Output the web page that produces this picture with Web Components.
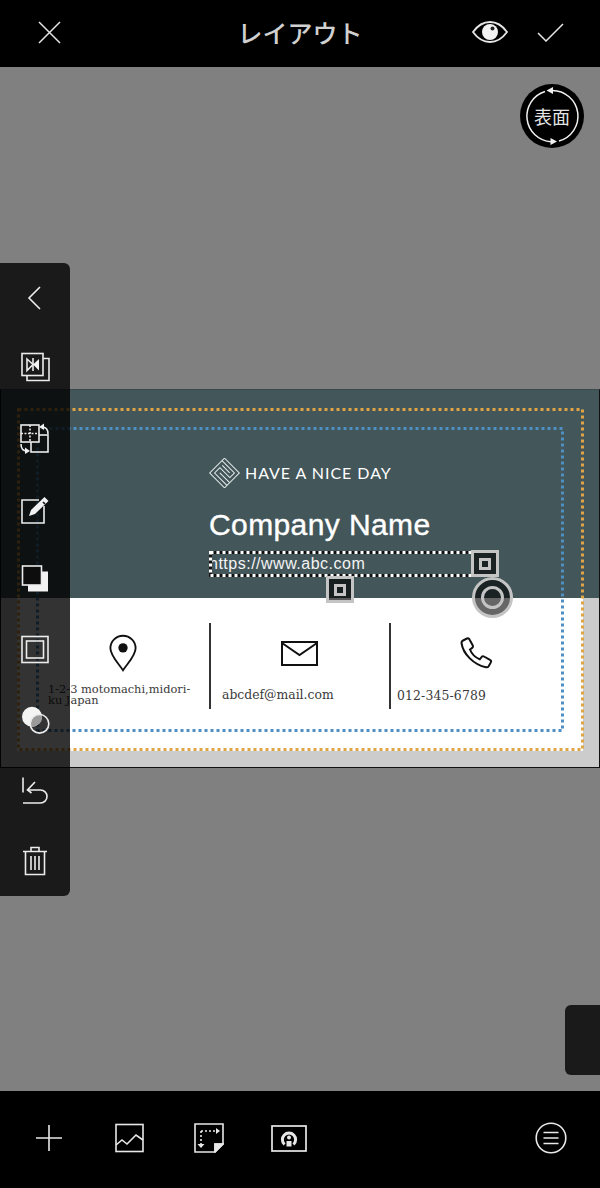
<!DOCTYPE html>
<html lang="ja">
<head>
<meta charset="utf-8">
<title>レイアウト</title>
<style>
  html, body { margin: 0; padding: 0; background: #808080; }
</style>
</head>
<body>
<layout-screen>
  <top-bar slot="top" title="レイアウト"></top-bar>
  <business-card slot="canvas">
    <span slot="brand">HAVE A NICE DAY</span>
    <span slot="company">Company Name</span>
    <span slot="url">https://www.abc.com</span>
    <span slot="address">1-2-3 motomachi,midori-ku Japan</span>
    <span slot="mail">abcdef@mail.com</span>
    <span slot="phone">012-345-6789</span>
  </business-card>
  <side-panel slot="overlay"></side-panel>
  <flip-button slot="overlay">表面</flip-button>
  <drawer-tab slot="overlay"></drawer-tab>
  <bottom-bar slot="bottom"></bottom-bar>
</layout-screen>

<script>
function define(name, css, html) {
  var template = document.createElement('template');
  template.innerHTML = `<style>:host, * { box-sizing: border-box; } ${css}</style>${html}`;
  customElements.define(name, class extends HTMLElement {
    constructor() {
      super();
      this.attachShadow({mode: 'open'});
      this.shadowRoot.appendChild(template.content.cloneNode(true));
    }
    connectedCallback() {
      var title = this.shadowRoot.querySelector('[data-title]');
      if (title) title.textContent = this.getAttribute('title');
      this.removeAttribute('title');
    }
  });
}

define('layout-screen', `
  :host { display: flex; flex-direction: column; width: 600px; height: 1188px; overflow: hidden; }
  .canvas { position: relative; flex: 1; background: #808080; padding-top: 322px; }
`, `
  <slot name="top"></slot>
  <div class="canvas"><slot name="canvas"></slot><slot name="overlay"></slot></div>
  <slot name="bottom"></slot>
`);

define('top-bar', `
  :host { display: grid; grid-template-columns: 1fr auto 1fr; align-items: center; height: 67px; background: #000; padding: 0 36px 3px 36px; }
  h1 { margin: 0; font: 500 25px/1 "Noto Sans CJK JP", sans-serif; color: #d0d0d0; }
  .right { display: flex; justify-content: flex-end; align-items: center; gap: 29px; }
  svg { display: block; }
  .close { margin-left: 2px; }
`, `
  <svg class="close" width="23" height="23" viewBox="0 0 23 23" fill="none" stroke="#e6e6e6" stroke-width="1.5"><path d="M1 1l21 21M22 1L1 22"/></svg>
  <h1 data-title></h1>
  <div class="right">
    <svg width="36" height="24" viewBox="0 0 36 24" fill="none"><path d="M1 12C6 5 11 2 18 2s12 3 17 10c-5 7-10 10-17 10S6 19 1 12z" stroke="#e6e6e6" stroke-width="1.8"/><circle cx="18" cy="12" r="8" fill="#f2f2f2"/><circle cx="20.5" cy="8.5" r="2" fill="#222"/></svg>
    <svg width="27" height="19" viewBox="0 0 27 19" fill="none" stroke="#e6e6e6" stroke-width="1.5"><path d="M1 10l8 8L26 1"/></svg>
  </div>
`);

define('bottom-bar', `
  :host { display: flex; align-items: center; height: 97px; background: #000; padding: 0 9.5px 3px 9px; }
  .cell { display: flex; justify-content: center; width: 80px; }
  .end { margin-left: auto; }
  svg { display: block; }
`, `
  <div class="cell"><svg width="28" height="28" viewBox="0 0 28 28" stroke="#e8e8e8" stroke-width="1.6"><path d="M1 14h26M14 1v26"/></svg></div>
  <div class="cell"><svg width="29" height="30" viewBox="0 0 29 30" fill="none" stroke="#e8e8e8" stroke-width="1.6"><rect x="1" y="1.5" width="27" height="27"/><path d="M1 22l6-5 5 4 9-9 7 5"/></svg></div>
  <div class="cell"><svg width="30" height="30" viewBox="0 0 30 30" fill="none" stroke="#e8e8e8" stroke-width="1.6"><path d="M1 1h28v20l-8 8H1z"/><path d="M21 29v-8h8" /><path d="M21 29l8-8v0h-8z" fill="#e8e8e8"/><path d="M7 8h15M7 8v14" stroke-dasharray="2 2"/><path d="M22 5l4 3-4 3z" fill="#e8e8e8" stroke="none"/><path d="M3.5 21h7L7 25z" fill="#e8e8e8" stroke="none"/></svg></div>
  <div class="cell"><svg width="36" height="27" viewBox="0 0 36 27" fill="none" stroke="#e8e8e8"><rect x="1" y="1" width="34" height="25" stroke-width="1.7"/><path d="M13.5 19.5a6.6 6.6 0 1 1 9 0" stroke-width="3"/><circle cx="18" cy="12.5" r="2" fill="#e8e8e8" stroke="none"/><rect x="15.5" y="16" width="5" height="5.5" fill="#e8e8e8" stroke="none"/></svg></div>
  <div class="cell end"><svg width="32" height="32" viewBox="0 0 32 32" fill="none" stroke="#e8e8e8" stroke-width="1.6"><circle cx="16" cy="16" r="14.8"/><path d="M8.5 10.5h15M8.5 16h15M8.5 21.5h15"/></svg></div>
`);

define('side-panel', `
  :host { position: absolute; left: 0; top: 196px; width: 70px; height: 633px; display: grid; grid-template-rows: repeat(9, 1fr); background: rgba(0,0,0,.8); border-radius: 0 6px 6px 0; }
  .tool { display: flex; align-items: center; justify-content: center; }
  svg { display: block; width: 40px; height: 40px; overflow: visible; fill: none; stroke: #ececec; stroke-width: 1.6; }
  .solid { fill: #f2f2f2; stroke: none; }
`, `
  <div class="tool"><svg viewBox="0 0 40 40"><path d="M25 9L14 20l11 11"/></svg></div>
  <div class="tool"><svg viewBox="0 0 40 40"><path d="M28 10.5h6v22H12v-5"/><rect x="7" y="5.5" width="21" height="22"/><path d="M18 10v13"/><path d="M12 11l6 5.500-6 6z"/><path class="solid" d="M24 11l-6 5.500 6 6z"/></svg></div>
  <div class="tool"><svg viewBox="0 0 40 40"><rect x="16" y="16" width="17" height="17"/><rect x="6" y="6" width="18" height="17" fill="#111"/><path d="M15 6v17M6 14.500h18" stroke-dasharray="2 1.500"/><path d="M33 15c0-5-2-7-6-7"/><path class="solid" d="M29 4.500l-5 3.500 5 3z"/><path d="M6 25c0 4 2 7 6 7"/><path class="solid" d="M10 28.500l5 3.500-5 3z"/></svg></div>
  <div class="tool"><svg viewBox="0 0 40 40"><path d="M24 11H7v23h22V17"/><path class="solid" d="M14 27l2-6L29.500 8l4 4L20 25z"/><path d="M28 13l2 2" stroke="#111"/></svg></div>
  <div class="tool"><svg viewBox="0 0 40 40"><rect class="solid" x="13" y="12.500" width="20" height="20"/><rect x="7.500" y="7" width="19" height="19" fill="#0d0d0d"/></svg></div>
  <div class="tool"><svg viewBox="0 0 40 40"><rect x="7" y="6.500" width="26" height="26"/><rect x="11.500" y="11" width="17" height="17"/></svg></div>
  <div class="tool"><svg viewBox="0 0 40 40"><circle cx="17" cy="16.800" r="10" fill="#f4f4f4" stroke="none"/><path d="M15.440 26.670A10 10 0 0 0 26.740 14.570 9.500 9.500 0 0 0 15.440 26.670z" fill="#9a9a9a" stroke="none"/><circle cx="24.500" cy="23.800" r="9.300"/></svg></div>
  <div class="tool"><svg viewBox="0 0 40 40"><path d="M8 7.500v15"/><path d="M20 12l-7.500 8 4 3"/><path d="M12.500 20h13a6.500 6.500 0 0 1 0 13H8"/></svg></div>
  <div class="tool"><svg viewBox="0 0 40 40"><path d="M8 10.500h24M16 10.500V6.500h8v4M10.500 10.500V33.500h19V10.500M16 15v14M20 15v14M24 15v14"/></svg></div>
`);

define('flip-button', `
  :host { position: absolute; left: 520px; top: 17px; width: 64px; height: 64px; display: flex; align-items: center; justify-content: center; border-radius: 50%; background: #000; color: #e4e4e4; font: 400 18px/1 "Noto Sans CJK JP", sans-serif; }
  svg { position: absolute; inset: 0; fill: none; stroke: #f0f0f0; stroke-width: 1.500; }
  svg polygon { fill: #f0f0f0; stroke: none; }
  span { position: relative; }
`, `
  <svg width="64" height="64" viewBox="0 0 64 64"><path d="M32 6.500A25.700 25.700 0 0 1 39 57"/><polygon points="26.500,6.500 33,3 33,10"/><path d="M25 7.500A25.700 25.700 0 0 0 31 57.700"/><polygon points="37,57.500 30.500,54 30.500,61"/></svg>
  <span><slot></slot></span>
`);

define('drawer-tab', `
  :host { position: absolute; right: 0; top: 938px; width: 35px; height: 70px; background: #1a1a1a; border-radius: 6px 0 0 6px; }
`, ``);

define('business-card', `
  :host { position: relative; display: block; height: 379px; background: #ccc; border: 1px solid #111; border-top-color: #39494d; color: #333; }
  .band { height: 208px; background: #43565a; padding: 68px 0 0 208px; color: #fff; }
  .brand { display: flex; align-items: center; gap: 5px; height: 30px; font: 400 16px/1 Lato, sans-serif; letter-spacing: .95px; white-space: nowrap; }
  .company { margin-top: 20px; font: 400 30px/34px "Liberation Sans", sans-serif; letter-spacing: .4px; -webkit-text-stroke: .4px #fff; white-space: nowrap; }
  .url { position: relative; width: 264px; height: 26px; margin-top: 9px; font: 400 16px/25px "Liberation Sans", sans-serif; letter-spacing: .5px; color: #f4f4f4; }
  .url svg.box { position: absolute; left: 0; top: 0; }
  .handle { position: absolute; width: 28px; height: 27px; border: 3px solid #c4c4c4; background: rgba(0,0,0,.65); display: flex; align-items: center; justify-content: center; }
  .handle i { width: 12px; height: 12px; border: 3px solid #c4c4c4; }
  .right { left: 262px; top: -1px; background: #1b2224; }
  .below { left: 117px; top: 25px; }
  .rotate { position: absolute; left: 263px; top: 26px; width: 41px; height: 41px; border-radius: 50%; border: 3px solid #c4c4c4; background: rgba(0,0,0,.6); display: flex; align-items: center; justify-content: center; }
  .rotate i { width: 23px; height: 23px; border-radius: 50%; border: 3.500px solid #c4c4c4; }
  .sheet { display: flex; height: 153px; margin: 0 16px 0 16px; background: #fff; padding-top: 25px; font: 400 12.400px/13px "DejaVu Serif", serif; }
  .col { display: flex; flex-direction: column; height: 86px; }
  .col svg { display: block; }
  .address { width: 194px; border-right: 2px solid #333; padding-left: 31px; }
  .address svg { margin: 11px 0 0 61px; }
  .address .txt { width: 150px; margin-top: 11.500px; font-size: 11.400px; line-height: 11.700px; color: #3a3a3a; }
  .mail { width: 180px; border-right: 2px solid #333; padding-left: 11px; }
  .mail svg { margin: 18px 0 0 59px; }
  .mail .txt { margin-top: 22px; color: #3a3a3a; white-space: nowrap; }
  .phone { padding-left: 6px; }
  .phone svg { margin: 14px 0 0 63px; }
  .phone .txt { margin-top: 18px; letter-spacing: .15px; color: #3a3a3a; white-space: nowrap; }
  .guides { position: absolute; left: -1px; top: -1px; pointer-events: none; }
`, `
  <div class="band">
    <div class="brand">
      <svg width="31" height="30" viewBox="0 0 30 30" fill="none" stroke="#e9eeee" stroke-width="1"><g transform="rotate(45 15 15)"><rect x="4.500" y="4.500" width="21" height="21"/><path d="M4.500 8H22v6.500H8V22h17.500"/><path d="M8 11.200h10.500M11.500 18.200h14"/></g></svg>
      <slot name="brand"></slot>
    </div>
    <div class="company"><slot name="company"></slot></div>
    <div class="url">
      <slot name="url"></slot>
      <svg class="box" width="266" height="27" viewBox="0 0 266 27" fill="none"><rect x="1.500" y="1.500" width="263" height="23" stroke="#111" stroke-width="3"/><rect x="1.500" y="1.500" width="263" height="23" stroke="#fff" stroke-width="3" stroke-dasharray="3 3"/></svg>
      <div class="rotate"><i></i></div>
      <div class="handle right"><i></i></div>
      <div class="handle below"><i></i></div>
    </div>
  </div>
  <div class="sheet">
    <div class="col address">
      <svg width="28" height="38" viewBox="0 0 30 40" fill="none" stroke="#111" stroke-width="2"><path d="M15 38.500C10 31 1.500 23 1.500 15a13.500 13.500 0 0 1 27 0C28.500 23 20 31 15 38.500z"/><circle cx="15" cy="14.500" r="5" fill="#111" stroke="none"/></svg>
      <div class="txt"><slot name="address"></slot></div>
    </div>
    <div class="col mail">
      <svg width="37" height="25" viewBox="0 0 37 25" fill="none" stroke="#111" stroke-width="2"><rect x="1" y="1" width="35" height="23"/><path d="M1 2l17.500 12L36 2"/></svg>
      <div class="txt"><slot name="mail"></slot></div>
    </div>
    <div class="col phone">
      <svg width="34" height="34" viewBox="0 0 34 34" fill="none" stroke="#111" stroke-width="2"><path d="M3 3.500L7 1.500c1-.5 2 0 2.500 1l3.300 6c.5 1 .2 1.800-.6 2.400l-2.200 1.600c1.500 4 5.500 8 9.800 9.800l1.800-2.300c.6-.8 1.500-1 2.400-.5l6 3.400c1 .5 1.300 1.500.8 2.500l-2 3.600c-.6 1-1.500 1.500-2.700 1.300C14 28 3 17 1.500 6c-.1-1 .5-2 1.500-2.500z"/></svg>
      <div class="txt"><slot name="phone"></slot></div>
    </div>
  </div>
  <svg class="guides" width="600" height="379" viewBox="0 0 600 379" fill="none" stroke-width="3" stroke-dasharray="3 3">
    <rect x="18.500" y="20.500" width="564" height="340" stroke="#e0a445"/>
    <rect x="37.500" y="39.500" width="525" height="302" stroke="#4f8fc4"/>
  </svg>
`);
</script>
</body>
</html>
